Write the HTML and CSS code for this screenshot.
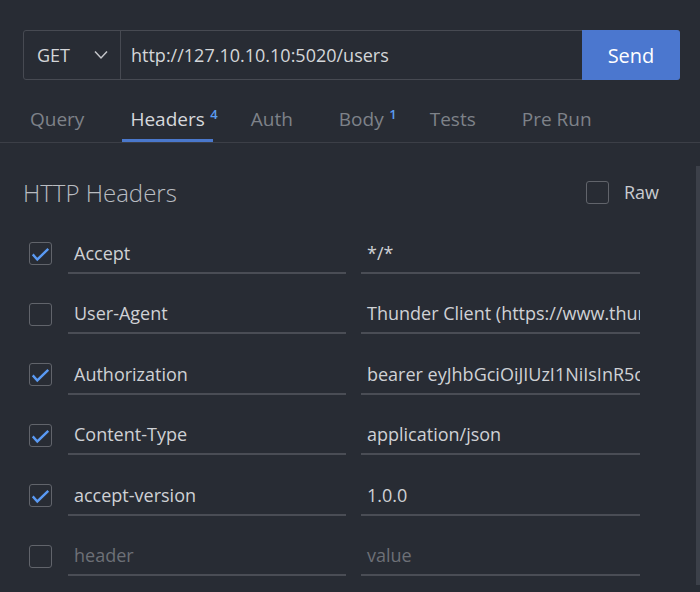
FILE: index.html
```html
<!DOCTYPE html>
<html>
<head>
<meta charset="utf-8">
<link rel="stylesheet" href="styles.css">
</head>
<body>
<div class="app">
  <div class="top">
    <div class="urlbar">
      <div class="method">
        <span>GET</span>
        <svg class="chev" width="14" height="10" viewBox="0 0 14 10"><path d="M1 1.5 L7 8 L13 1.5" fill="none" stroke="#c4c6ca" stroke-width="1.5"/></svg>
      </div>
      <div class="url">http://127.10.10.10:5020/users</div>
      <button class="send">Send</button>
    </div>
    <nav class="tabs">
      <div class="tab">Query</div>
      <div class="tab active">Headers<sup class="badge">4</sup></div>
      <div class="tab">Auth</div>
      <div class="tab">Body<sup class="badge">1</sup></div>
      <div class="tab">Tests</div>
      <div class="tab">Pre Run</div>
    </nav>
  </div>
  <div class="content">
    <div class="scrollthumb"></div>
    <div class="head-row">
      <h1 class="title">HTTP Headers</h1>
      <label class="raw"><span class="cb"></span><span class="raw-text">Raw</span></label>
    </div>
    <div class="rows">
      <div class="row">
        <span class="cb checked"><svg viewBox="0 0 23 23"><path d="M3 12.5 L8 18 L20 6.5" fill="none" stroke="#5a9af4" stroke-width="2.6"/></svg></span>
        <div class="field">Accept</div>
        <div class="field">*/*</div>
      </div>
      <div class="row">
        <span class="cb"></span>
        <div class="field">User-Agent</div>
        <div class="field">Thunder Client (https://www.thunderclient.com)</div>
      </div>
      <div class="row">
        <span class="cb checked"><svg viewBox="0 0 23 23"><path d="M3 12.5 L8 18 L20 6.5" fill="none" stroke="#5a9af4" stroke-width="2.6"/></svg></span>
        <div class="field">Authorization</div>
        <div class="field">bearer eyJhbGciOiJIUzI1NiIsInR5cCI6IkpXVCJ9</div>
      </div>
      <div class="row">
        <span class="cb checked"><svg viewBox="0 0 23 23"><path d="M3 12.5 L8 18 L20 6.5" fill="none" stroke="#5a9af4" stroke-width="2.6"/></svg></span>
        <div class="field">Content-Type</div>
        <div class="field">application/json</div>
      </div>
      <div class="row">
        <span class="cb checked"><svg viewBox="0 0 23 23"><path d="M3 12.5 L8 18 L20 6.5" fill="none" stroke="#5a9af4" stroke-width="2.6"/></svg></span>
        <div class="field">accept-version</div>
        <div class="field">1.0.0</div>
      </div>
      <div class="row">
        <span class="cb"></span>
        <div class="field ph">header</div>
        <div class="field ph">value</div>
      </div>
    </div>
  </div>
</div>
</body>
</html>
```
FILE: styles.css
```css
html, body {
  margin: 0;
  padding: 0;
  background: #282c34;
  height: 100%;
  overflow: hidden;
}
body {
  font-family: "Open Sans", "Noto Sans", sans-serif;
  font-size: 18px;
  color: #cfd1d5;
}
.app {
  width: 700px;
  height: 592px;
}
.top {
  padding-top: 30px;
}
.urlbar {
  display: flex;
  margin-left: 23px;
  width: 657px;
  height: 50px;
  box-sizing: border-box;
  border: 1px solid #474a52;
  border-radius: 3px;
}
.method {
  width: 97px;
  box-sizing: border-box;
  border-right: 1px solid #474a52;
  display: flex;
  align-items: center;
  justify-content: space-between;
  padding: 0 12px 0 13px;
  color: #d4d6d9;
}
.chev {
  display: block;
}
.url {
  flex: 1;
  display: flex;
  align-items: center;
  padding-left: 10px;
  color: #d4d6d9;
  white-space: nowrap;
}
.send {
  width: 98px;
  margin: -1px -1px -1px 0;
  border: none;
  border-radius: 0 3px 3px 0;
  background: #4b77cf;
  color: #ffffff;
  font-family: inherit;
  font-size: 20px;
  padding: 0;
}
.tabs {
  display: flex;
  gap: 30px;
  margin-top: 20px;
  padding-left: 22px;
  height: 42px;
  border-bottom: 1px solid #3c3f47;
  box-sizing: content-box;
}
.tab {
  position: relative;
  padding: 0 8px;
  font-size: 19px;
  line-height: 38px;
  height: 39px;
  color: #7e8289;
  box-sizing: border-box;
}
.tab.active {
  color: #d6d8dc;
  border-bottom: 3px solid #4a78cc;
  height: 42px;
}
.badge {
  position: absolute;
  top: 4px;
  right: -5px;
  font-size: 13px;
  font-weight: 600;
  color: #5b9cf0;
  line-height: 20px;
  vertical-align: baseline;
}
.content {
  position: relative;
  height: 449px;
  padding-top: 29px;
  box-sizing: border-box;
}
.scrollthumb {
  position: absolute;
  right: 0;
  top: 23px;
  width: 4px;
  height: 419px;
  background: #3c4049;
}
.head-row {
  display: flex;
  align-items: center;
  justify-content: space-between;
  height: 40px;
  padding: 0 41px 0 23px;
}
.title {
  margin: 0;
  font-size: 24px;
  font-weight: 300;
  color: #b9bcc1;
}
.raw {
  display: flex;
  align-items: center;
  gap: 15px;
  color: #c9cbcf;
}
.cb {
  display: block;
  width: 23px;
  height: 23px;
  box-sizing: border-box;
  border: 1px solid #61646b;
  border-radius: 3px;
  flex: none;
}
.cb svg {
  display: block;
  width: 21px;
  height: 21px;
}
.rows {
  display: flex;
  flex-direction: column;
  gap: 20.5px;
  margin-top: 21.5px;
  padding-left: 29px;
}
.row {
  display: flex;
  align-items: center;
  gap: 15px;
  height: 40px;
}
.row .cb {
  margin-right: 1px;
}
.field {
  width: 278px;
  height: 40px;
  box-sizing: border-box;
  border-bottom: 2px solid #4a4d55;
  padding: 0 0 0 6px;
  display: flex;
  align-items: center;
  white-space: nowrap;
  overflow: hidden;
  color: #cfd1d5;
}
.field + .field {
  width: 279px;
}
.field.ph {
  color: #6d7077;
}
```
